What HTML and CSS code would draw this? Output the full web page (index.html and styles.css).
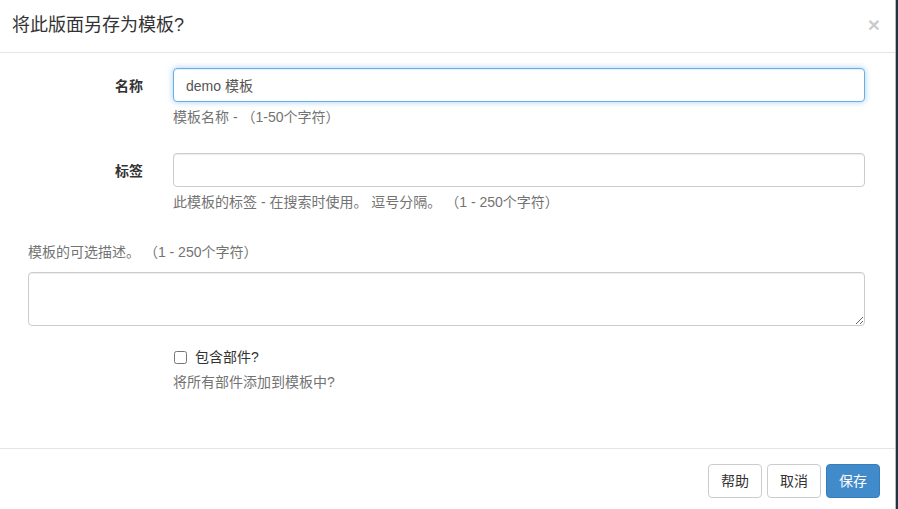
FILE: index.html
```html
<!DOCTYPE html>
<html lang="zh-CN">
<head>
    <meta charset="UTF-8">
    <title>将此版面另存为模板?</title>
    <link rel="stylesheet" href="styles.css">
</head>
<body>
    <div class="modal">
        <div class="modal-header">
            <h4 class="modal-title">将此版面另存为模板?</h4>
            <button class="close" type="button">&times;</button>
        </div>

        <div class="modal-body">
            <div class="form-group">
                <label class="control-label" for="name">名称</label>
                <div class="control">
                    <input class="form-control focused" id="name" type="text" value="demo 模板">
                    <p class="help-block">模板名称 - （1-50个字符）</p>
                </div>
            </div>

            <div class="form-group">
                <label class="control-label" for="tags">标签</label>
                <div class="control">
                    <input class="form-control" id="tags" type="text">
                    <p class="help-block">此模板的标签 - 在搜索时使用。 逗号分隔。 （1 - 250个字符）</p>
                </div>
            </div>

            <div class="desc-group">
                <label class="desc-label" for="desc">模板的可选描述。 （1 - 250个字符）</label>
                <textarea class="form-control desc" id="desc"></textarea>
            </div>

            <div class="form-group">
                <div class="control-label"></div>
                <div class="control">
                    <label class="checkbox"><input type="checkbox"> 包含部件?</label>
                    <p class="help-block">将所有部件添加到模板中?</p>
                </div>
            </div>
        </div>

        <div class="modal-footer">
            <button class="btn">帮助</button>
            <button class="btn">取消</button>
            <button class="btn btn-primary">保存</button>
        </div>
    </div>
    <div class="backdrop"></div>
</body>
</html>
```

FILE: styles.css
```css
body {
    margin: 0;
    height: 100vh;
    display: flex;
    font-family: "Liberation Sans", "Noto Sans CJK SC", sans-serif;
    font-size: 14px;
    color: #333;
    overflow: hidden;
}

.modal {
    width: 895px;
    background: #fff;
    border-right: 1px solid #b8bcc0;
    flex-shrink: 0;
}

.backdrop {
    flex: 1;
    background: #1f3344;
}

.modal-header {
    display: flex;
    align-items: center;
    justify-content: space-between;
    height: 52px;
    padding: 0 15px 0 12px;
    border-bottom: 1px solid #e5e5e5;
}

.modal-title {
    margin: 0;
    font-size: 18px;
    font-weight: normal;
    line-height: 24px;
    color: #333;
    padding-bottom: 2px;
}

.close {
    background: none;
    border: none;
    padding: 0;
    font-family: "Liberation Sans", sans-serif;
    font-size: 21px;
    font-weight: bold;
    line-height: 1;
    color: #000;
    opacity: 0.2;
    cursor: pointer;
    margin-bottom: 4px;
}

.modal-body {
    padding: 15px 30px 30px 28px;
}

.form-group {
    display: flex;
    margin-bottom: 15px;
}

.control-label {
    width: 115px;
    padding: 8px 30px 0 0;
    text-align: right;
    font-weight: bold;
    line-height: 20px;
    flex-shrink: 0;
}

.control {
    flex: 1;
}

.form-control {
    display: block;
    box-sizing: border-box;
    width: 100%;
    height: 34px;
    padding: 6px 12px;
    font-family: inherit;
    font-size: 14px;
    color: #555;
    background: #fff;
    border: 1px solid #ccc;
    border-radius: 4px;
    box-shadow: inset 0 1px 1px rgba(0, 0, 0, 0.075);
}

.form-control.focused {
    border-color: #66afe9;
    outline: 0;
    box-shadow: inset 0 1px 1px rgba(0, 0, 0, 0.075), 0 0 6px rgba(102, 175, 233, 0.6);
}

.help-block {
    margin: 5px 0 11px;
    line-height: 20px;
    color: #737373;
}

.desc-group {
    margin-top: 19px;
    margin-bottom: 21px;
}

.desc-label {
    display: block;
    line-height: 20px;
    color: #737373;
    margin-bottom: 10px;
}

.desc {
    height: 54px;
    resize: vertical;
}

.checkbox {
    display: flex;
    align-items: center;
    gap: 8px;
    line-height: 20px;
    margin-left: 1px;
}

.checkbox input {
    margin: 0;
    width: 13px;
    height: 13px;
}

.modal-footer {
    display: flex;
    justify-content: flex-end;
    gap: 5px;
    padding: 15px 15px;
    border-top: 1px solid #e5e5e5;
}

.btn {
    height: 34px;
    padding: 6px 12px;
    font-family: inherit;
    font-size: 14px;
    line-height: 20px;
    color: #333;
    background: #fff;
    border: 1px solid #ccc;
    border-radius: 4px;
    cursor: pointer;
}

.btn-primary {
    color: #fff;
    background: #428bca;
    border-color: #357ebd;
}
```
